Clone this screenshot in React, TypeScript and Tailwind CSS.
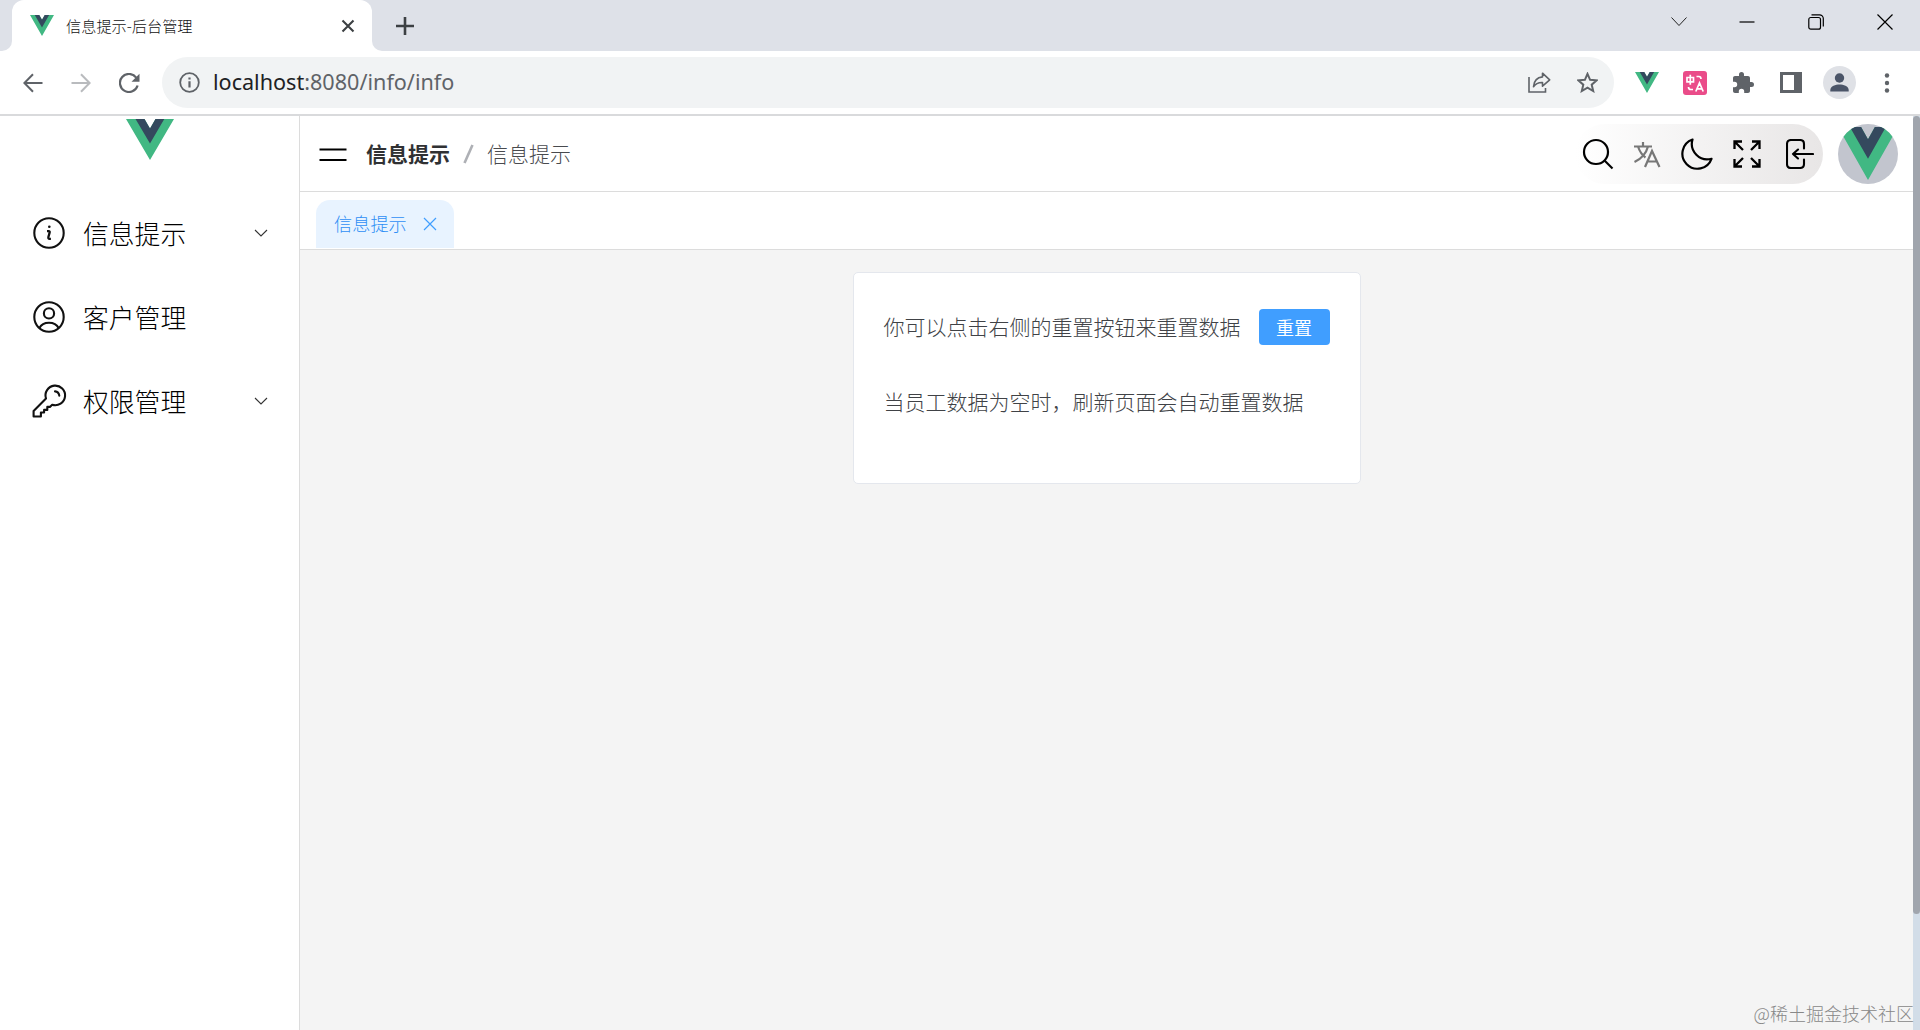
import React from "react";

interface IconProps {
  className?: string;
}

interface MenuItem {
  label: string;
  icon: React.ReactNode;
  hasChildren: boolean;
}

const VueLogo: React.FC<IconProps> = ({ className }) => (
  <svg viewBox="0 0 262 227" preserveAspectRatio="none" className={className}>
    <path d="M161 0l-30 52L101 0H0l131 227L262 0z" fill="#41b883" />
    <path d="M161 0l-30 52L101 0H52l79 136L209 0z" fill="#34495e" />
  </svg>
);

const InfoIcon = () => (
  <svg width="34" height="34" viewBox="0 0 34 34" fill="none" stroke="#111" strokeWidth="2.1">
    <circle cx="17" cy="17" r="14.7" />
    <path d="M15 15.2h1.600c1.100 0 1.300.6 1 1.500l-1.200 4.300c-.3 1.300.2 1.900 1.100 1.900h1.400" strokeWidth="2.300" />
    <circle cx="17.300" cy="10.800" r="1.300" fill="#111" stroke="none" />
  </svg>
);

const UserIcon = () => (
  <svg width="34" height="34" viewBox="0 0 34 34" fill="none" stroke="#111" strokeWidth="2.1">
    <circle cx="17" cy="17" r="14.7" />
    <circle cx="17" cy="13.4" r="5.1" />
    <path d="M7.4 28c1.8-3.6 5.3-5.3 9.6-5.3s7.8 1.7 9.6 5.3" />
  </svg>
);

const KeyIcon = () => (
  <svg width="36" height="36" viewBox="0 0 36 36" fill="none" stroke="#111" strokeWidth="2.1" strokeLinejoin="round" strokeLinecap="round">
    <path d="M14 15.500a9.800 9.800 0 1 1 6.200 6.200l-2.300 2.200h-2.600v3h-3.200v2.600H8.900v4H1.600v-5.600z" />
    <path d="M23 8.400c2.400.3 4 1.900 4.300 4.300" />
  </svg>
);

const ChevronIcon = () => (
  <svg width="14" height="8" viewBox="0 0 14 8" fill="none" stroke="#333" strokeWidth="1.100">
    <path d="M1 1l6 6 6-6" />
  </svg>
);

const menus: MenuItem[] = [
  { label: "信息提示", icon: <InfoIcon />, hasChildren: true },
  { label: "客户管理", icon: <UserIcon />, hasChildren: false },
  { label: "权限管理", icon: <KeyIcon />, hasChildren: true },
];

const TabStrip = () => (
  <div className="flex h-[51px] shrink-0 bg-[#dee1e8]">
    <div className="w-3 bg-white">
      <div className="h-full rounded-br-[10px] bg-[#dee1e8]" />
    </div>
    <div className="bg-[#dee1e8]">
      <div className="flex h-full w-[360px] items-center rounded-t-[12px] bg-white pl-[18px] pr-[17px]">
        <VueLogo className="h-[21px] w-6" />
        <span className="ml-3 text-[15.200px] font-light leading-none text-[#111]">
          信息提示-后台管理
        </span>
        <svg className="ml-auto" width="14" height="14" viewBox="0 0 14 14" stroke="#3c4043" strokeWidth="2.100">
          <path d="M1.500 1.500l11 11m0-11l-11 11" />
        </svg>
      </div>
    </div>
    <div className="flex-1 bg-white">
      <div className="flex h-full items-center rounded-bl-[10px] bg-[#dee1e8] pl-6">
        <svg width="18" height="18" viewBox="0 0 18 18" stroke="#3c4043" strokeWidth="2.600">
          <path d="M9 0v18M0 9h18" />
        </svg>
        <div className="mb-[8px] ml-auto mr-[27px] flex items-center">
          <svg width="16" height="10" viewBox="0 0 16 10" fill="none" stroke="#222">
            <path d="M.5.5L8 8.500 15.500.5" />
          </svg>
          <svg className="ml-[52px]" width="16" height="16" viewBox="0 0 16 16" stroke="#000" strokeWidth="1.200">
            <path d="M.5 8h15" />
          </svg>
          <svg className="ml-[53px]" width="16" height="16" viewBox="0 0 16 16" fill="none" stroke="#000" strokeWidth="1.200">
            <rect x=".8" y="3.500" width="11.700" height="11.700" rx="2" />
            <path d="M3.500.8h8a3.800 3.800 0 0 1 3.800 3.800v8" />
          </svg>
          <svg className="ml-[53px]" width="16" height="16" viewBox="0 0 16 16" stroke="#000" strokeWidth="1.200">
            <path d="M.5.5l15 15m0-15l-15 15" />
          </svg>
        </div>
      </div>
    </div>
  </div>
);

const AddressBar = () => (
  <div className="flex h-[65px] shrink-0 items-center border-b-2 border-[#d9dadc] bg-white pl-[23px] pr-[30px]">
    <svg width="20" height="20" viewBox="0 0 20 20" fill="none" stroke="#5f6368" strokeWidth="2">
      <path d="M19.500 10H2M10 1.200L1.400 10l8.600 8.800" />
    </svg>
    <svg className="ml-[28px]" width="20" height="20" viewBox="0 0 20 20" fill="none" stroke="#b9bbbe" strokeWidth="2">
      <path d="M.5 10H18M10 1.200l8.600 8.800-8.600 8.800" />
    </svg>
    <svg className="ml-[28px]" width="21" height="20" viewBox="0 0 21 20" fill="none" stroke="#5f6368" strokeWidth="2.200">
      <path d="M17.200 4.600A9 9 0 1 0 18.600 12.500" />
      <path d="M20.500.8v8h-8z" fill="#5f6368" stroke="none" />
    </svg>
    <div className="ml-[22px] flex h-[51px] flex-1 items-center rounded-full bg-[#f1f3f4] pl-[17px] pr-[16px]">
      <svg width="21" height="21" viewBox="0 0 21 21" fill="none" stroke="#5f6368" strokeWidth="1.800">
        <circle cx="10.500" cy="10.500" r="9.300" />
        <path d="M10.500 9.200v6.300M10.500 5.400v2.200" strokeWidth="2.200" />
      </svg>
      <span className="mb-[2px] ml-[13px] font-['Noto_Sans'] text-[21.600px] leading-none text-[#5f6368]">
        <span className="text-[#202124]">localhost</span>:8080/info/info
      </span>
      <svg className="ml-auto" width="23" height="21" viewBox="0 0 23 21" fill="none" stroke="#5f6368" strokeWidth="1.600">
        <path d="M1 5v15h16.500v-4" />
        <path d="M14.500 1.200l7.200 6.600-7.200 6.400v-3.700c-4.500-.2-7 1.200-9 4.200.4-5.200 3.400-9.200 9-9.800z" strokeLinejoin="round" />
      </svg>
      <svg className="ml-[26px]" width="21" height="21" viewBox="0 0 21 21" fill="none" stroke="#5f6368" strokeWidth="2">
        <path d="M10.500 1.800l2.600 6 6.600.5-5 4.400 1.500 6.300-5.700-3.400-5.700 3.400 1.500-6.300-5-4.400 6.600-.5z" />
      </svg>
    </div>
    <div className="ml-[21px] flex items-center">
      <VueLogo className="h-[21px] w-6" />
      <svg className="ml-6" width="24" height="24" viewBox="0 0 24 24" fill="none" stroke="#fff" strokeWidth="1.700">
        <rect width="24" height="24" rx="3" fill="#ea4c89" stroke="none" />
        <path d="M4 6.500h6.500v4.300H4zM7.300 3.800v10M13.500 5.500h2.300c1.500 0 2.200.8 2.200 2.500M5.500 16c0 1.700.8 2.500 2.300 2.500H10M12.800 20.500l3.700-8.500 3.700 8.500M14 17.800h5" />
      </svg>
      <svg className="ml-[24px]" width="24" height="24" viewBox="0 0 24 24" fill="#5f6368">
        <path d="M20.500 11H19V7c0-1.100-.9-2-2-2h-4V3.500a2.500 2.500 0 0 0-5 0V5H4c-1.100 0-2 .9-2 2v3.800h1.500a2.700 2.700 0 0 1 0 5.400H2V20c0 1.100.9 2 2 2h3.800v-1.500a2.700 2.700 0 0 1 5.400 0V22H17c1.100 0 2-.9 2-2v-4h1.500a2.500 2.500 0 0 0 0-5z" />
      </svg>
      <svg className="ml-[25px]" width="22" height="21" viewBox="0 0 22 21">
        <path d="M0 0h22v21H0zM3 3v15h11V3z" fill="#5f6368" fillRule="evenodd" />
      </svg>
      <svg className="ml-[21px]" width="33" height="33" viewBox="0 0 33 33">
        <circle cx="16.500" cy="16.500" r="16.500" fill="#dfe1e6" />
        <circle cx="16.500" cy="12" r="4.700" fill="#4b5568" />
        <path d="M7.300 25.500v-1.600c0-3.800 5.400-5.500 9.200-5.500s9.200 1.700 9.200 5.500v1.600z" fill="#4b5568" />
      </svg>
      <svg className="ml-[28px]" width="6" height="20" viewBox="0 0 6 20" fill="#5f6368">
        <circle cx="3" cy="2.500" r="2.200" />
        <circle cx="3" cy="10" r="2.200" />
        <circle cx="3" cy="17.500" r="2.200" />
      </svg>
    </div>
  </div>
);

const Sidebar = () => (
  <aside className="w-[300px] shrink-0 border-r border-[#dcdcdc] bg-white">
    <div className="flex h-[75px] justify-center pt-[3px]">
      <VueLogo className="h-[41px] w-12" />
    </div>
    {menus.map((menu) => (
      <div key={menu.label} className="flex h-[84px] items-center pl-8 pr-[31px]">
        <div className="flex w-[51px]">{menu.icon}</div>
        <span className="text-[25.800px] font-light leading-none text-black">{menu.label}</span>
        {menu.hasChildren && (
          <div className="ml-auto">
            <ChevronIcon />
          </div>
        )}
      </div>
    ))}
  </aside>
);

const Toolbar = () => (
  <div className="flex h-[60px] w-[248px] items-center rounded-full bg-linear-to-r from-white to-[#e8e6e6] pl-[7px]">
    <svg width="32" height="32" viewBox="0 0 32 32" fill="none" stroke="#000" strokeWidth="2.200">
      <circle cx="14" cy="14" r="12" />
      <path d="M22.500 22.500l8 8" />
    </svg>
    <svg className="ml-[19px]" width="28" height="27" viewBox="0 0 28 27" fill="none" stroke="#777" strokeWidth="2.200">
      <path d="M1 5.500h18M10 1v4.500M5 5.500c2 6 4 8.500 7.500 11M15 5.500C13 13 9 17.500 1.500 21M12 26l7-16L26.500 26M14.500 20.500h9.500" />
    </svg>
    <svg className="ml-[20px]" width="32" height="32" viewBox="0 0 32 32" fill="none" stroke="#000" strokeWidth="2.200" strokeLinejoin="round">
      <path d="M11.500 1.500A15 15 0 1 0 30.500 20.800 15.500 15.500 0 0 1 11.500 1.500z" />
    </svg>
    <svg className="ml-[20px]" width="28" height="28" viewBox="0 0 28 28" fill="none" stroke="#000" strokeWidth="2.300">
      <path d="M1.500 9V1.500H9M1.500 1.500l8.500 8.500M19 1.500h7.500V9M26.500 1.500L18 10M1.500 19v7.500H9M1.500 26.500L10 18M19 26.500h7.500V19M26.500 26.500L18 18" />
    </svg>
    <svg className="ml-[25px]" width="28" height="30" viewBox="0 0 28 30" fill="none" stroke="#000" strokeWidth="2.100" strokeLinejoin="round" strokeLinecap="round">
      <path d="M18 9.500V5c0-2.500-1-4-4-4H5C2.500 1 1 2.500 1 5v20c0 2.500 1.500 4 4 4h9c3 0 4-1.500 4-4v-4.500M27 15H7M12 10.500L7 15l5 4.500" />
    </svg>
  </div>
);

const Header = () => (
  <header className="flex h-[76px] shrink-0 items-center border-b border-[#dcdcdc] bg-white pl-[19px] pr-[15px]">
    <svg className="mt-[2px]" width="28" height="14" viewBox="0 0 28 14" stroke="#000" strokeWidth="2.200">
      <path d="M.5 1.500h27M.5 12h27" />
    </svg>
    <div className="ml-[19px] flex items-center text-[21px] leading-none">
      <span className="font-bold text-[#303133]">信息提示</span>
      <svg className="mx-[13px]" width="11" height="20" viewBox="0 0 11 20" stroke="#aeb0b5" strokeWidth="2.600">
        <path d="M1.500 19l8-18" />
      </svg>
      <span className="font-light text-[#484a4e]">信息提示</span>
    </div>
    <div className="ml-auto flex items-center gap-[15px] pt-[1px]">
      <Toolbar />
      <div className="flex size-[60px] justify-center overflow-hidden rounded-full bg-[#c2c5ce]">
        <VueLogo className="mt-[3px] h-[53px] w-[60px] shrink-0" />
      </div>
    </div>
  </header>
);

const PageTabs = () => (
  <div className="flex h-[58px] shrink-0 items-end border-b border-[#dcdcdc] bg-white pb-[1px] pl-4">
    <div className="flex h-12 w-[138px] items-center rounded-t-[14px] bg-[#e8f3ff] pl-[18px] pr-[17px] text-[#409eff]">
      <span className="mb-[1px] text-[18.200px] font-light leading-none text-[#2f8ff5]">信息提示</span>
      <svg className="ml-auto" width="14" height="14" viewBox="0 0 14 14" stroke="currentColor" strokeWidth="1.200">
        <path d="M1 1l12 12M13 1L1 13" />
      </svg>
    </div>
  </div>
);

const InfoCard = () => (
  <div className="mt-[22px] h-[212px] w-[508px] rounded-[5px] border border-[#e4e7ed] bg-white px-[30px] pt-9 text-[21px] font-light text-[#404246]">
    <div className="flex h-9 items-center justify-between">
      <span className="whitespace-nowrap">你可以点击右侧的重置按钮来重置数据</span>
      <button className="flex h-9 w-[71px] shrink-0 items-center justify-center rounded-[4px] bg-[#409eff] text-[18px] font-normal leading-none text-white">
        重置
      </button>
    </div>
    <p className="mt-[38px] whitespace-nowrap leading-9">当员工数据为空时，刷新页面会自动重置数据</p>
  </div>
);

export default function App() {
  return (
    <div className="relative flex h-[1030px] w-[1920px] flex-col overflow-hidden bg-white font-['Noto_Sans_CJK_SC',sans-serif]">
      <TabStrip />
      <AddressBar />
      <div className="flex min-h-0 flex-1">
        <Sidebar />
        <div className="flex min-w-0 flex-1 flex-col bg-[#f4f4f4]">
          <Header />
          <PageTabs />
          <main className="flex flex-1 items-start justify-center">
            <InfoCard />
          </main>
        </div>
        <div className="w-[7px] shrink-0 bg-[#d2dde8]">
          <div className="h-[798px] rounded-full bg-[#a0a5ad]" />
        </div>
      </div>
      <span className="absolute bottom-2 right-[6px] text-[18px] font-light leading-none text-[#888]">
        @稀土掘金技术社区
      </span>
    </div>
  );
}
